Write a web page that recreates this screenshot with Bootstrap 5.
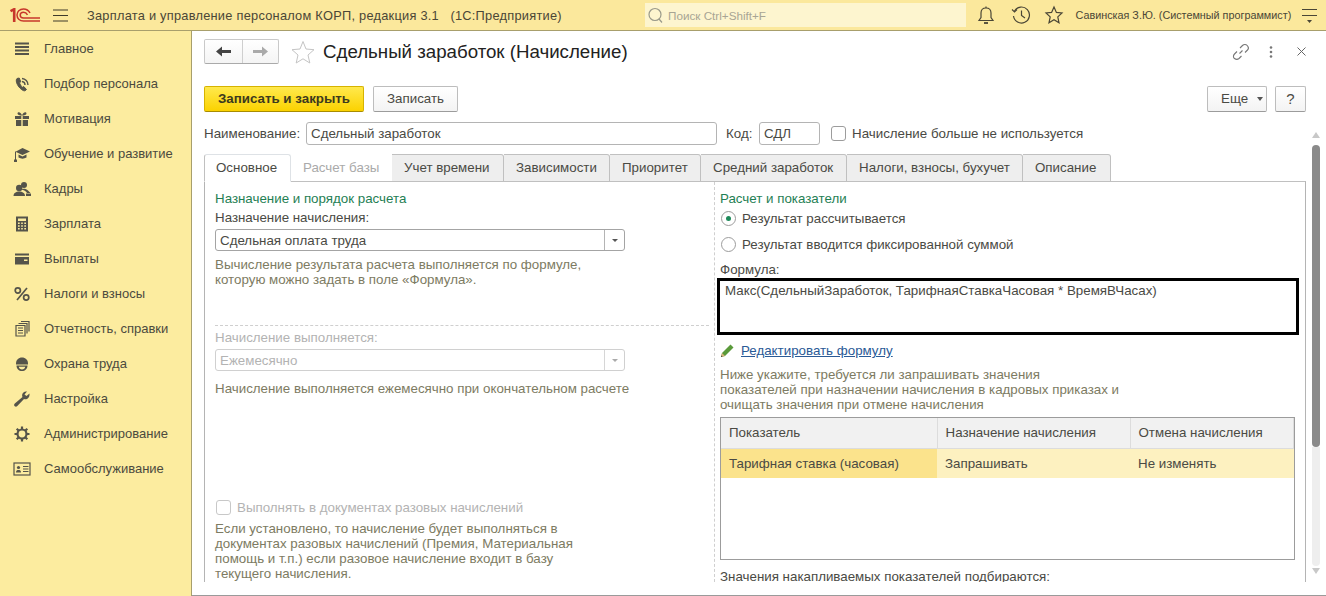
<!DOCTYPE html>
<html lang="ru">
<head>
<meta charset="utf-8">
<title>Сдельный заработок (Начисление)</title>
<link href="https://cdn.jsdelivr.net/npm/bootstrap@5.3.0/dist/css/bootstrap.min.css" rel="stylesheet">
<style>
html,body{height:596px;overflow:hidden}
body{font-family:"Liberation Sans",Arial,sans-serif;font-size:13.33px;color:#4a4a44;background:#fff;line-height:15px}
.app-top{height:31px;background:#fbe89c;border-bottom:1px solid #a89f6c;color:#4a4636;padding-left:10px}
.app-logo{width:30px;height:14px;flex:none}
.app-burger{width:15px;height:13px;margin-left:13px;margin-right:19px;color:#3e3a2a;flex:none}
.app-title{font-size:12.8px;letter-spacing:.02em;width:558px;flex:none}
.app-search{width:321px;height:24px;background:#fdf5cf;color:#a8a594;padding-left:2px;margin-right:10px;font-size:11.7px;flex:none}
.app-ticon{width:20px;height:20px;color:#4a4636;flex:none}
.app-user{font-size:10.8px;margin-left:12px;width:226px;flex:none}
.app-body{height:565px}
.side{width:192px;background:#fcec9f;border-right:1px solid #a89f6c;flex:none;color:#4b4a3e}
.side-item{height:35px;padding-left:13px;gap:13px;font-size:13px}
.side-item svg{width:18px;height:18px;flex:none;color:#55544a}
.work{border-bottom:1px solid #9a9a9a;height:565px;overflow:hidden}
.work-main{width:1114px;padding:8px 0 0 12px;flex:none}
.nav-pair{width:75px;height:25px;border:1px solid #c9c9c9;border-bottom-color:#aaa;border-radius:2px;background:linear-gradient(#fff,#f4f4f4)}
.nav-pair span{width:50%;color:#444}
.nav-pair span+span{border-left:1px solid #cfcfcf;color:#aaa}
.page-star{width:24px;height:24px;margin-left:12px;margin-right:8px;color:#c4c4c4}
.page-title{font-size:18.7px;line-height:25px;color:#222;font-weight:400}
.bar-row{margin-top:22px;height:26px}
.btn-one{height:26px;padding:0 13px;font-size:13.33px;line-height:24px;border-radius:2px;border:1px solid #bdbdbd;border-bottom-color:#9c9c9c;background:linear-gradient(#fff,#f3f3f3);color:#4a4a44}
.btn-one:hover{border-color:#bdbdbd;color:#4a4a44}
.btn-save{width:160px;background:linear-gradient(#ffe94d,#fbd200);border-color:#d6b300;border-bottom-color:#a88c00;font-weight:700;color:#3c3a1e;margin-right:9px;padding:0}
.btn-save:hover{background:#fbd200;border-color:#d6b300;color:#3c3a1e}
.btn-more{width:60px;padding:0 0 0 13px}
.btn-more svg{margin-left:9px}
.btn-help{width:31px;padding:0;font-size:15px}
.name-row{margin-top:10px;height:23px}
.fld{height:23px;border:1px solid #b4b4b4;border-radius:3px;padding:0 4px;color:#4a4a44;line-height:21px;background:#fff}
.chk{width:15px;height:15px;border:1px solid #9c9c9c;border-radius:3px;background:#fff;flex:none}
.tab-line{margin-top:9px;height:27px;border-bottom:0;gap:0;flex-wrap:nowrap}
.tab-line .nav-link{height:28px;padding:4px 11px 0 12px;font-size:13.33px;color:#4a4a44;background:#eee;border:1px solid #c0c0c0;border-left:0;border-radius:0 3px 0 0;margin:0;line-height:17px;white-space:nowrap}
.tab-line .nav-link.active{padding-left:11px;background:#fff;border-left:1px solid #c0c0c0;border-bottom-color:#fff;border-radius:3px 3px 0 0;color:#4a4a44;position:relative;z-index:1}
.tab-line .nav-link.disabled{color:#aaa}
.pane{height:401px;width:1102px;border:1px solid #b4b4b4;border-bottom:0;border-top:1px solid #c0c0c0;overflow:hidden}
.col-l{width:510px;padding:9px 10px 0 10px;border-right:1px dashed #cfcfcf;flex:none}
.col-r{padding:9px 0 0 5px;flex:1;min-width:0}
.grp{color:#1f8054;height:15px}
.lbl{height:15px}
.help{color:#7d7b62}
.off{color:#b3b3b3}
.combo{height:22px;width:410px;border:1px solid #a4a4a4;border-radius:3px;padding-left:4px;color:#4a4a44;background:#fff}
.combo-off{border-color:#d0d0d0;color:#b3b3b3}
.combo-btn{width:20px;height:100%;border-left:1px solid #b4b4b4;flex:none}
.combo-off .combo-btn{border-left-color:#d6d6d6}
.combo-btn i{display:block;border:3px solid transparent;border-top:3px solid #555;border-bottom:0}
.combo-off .combo-btn i{border-top-color:#aaa}
.rule-d{border-top:1px dashed #cfcfcf;margin-right:-5px}
.rad{width:15px;height:15px;border:1px solid #9c9c9c;border-radius:50%;flex:none;background:#fff}
.rad i{display:block;width:5px;height:5px;border-radius:50%;background:#1e8a5a}
.formula{height:57px;width:582px;margin-left:-3px;border:3px solid #000;padding:2px 5px;color:#4a4a44;margin-top:1px}
.edit-link{color:#2a5a96;text-decoration:underline}
.grid-box{width:575px;height:143px;border:1px solid #9c9c9c;margin-top:5px}
.grid-t{table-layout:fixed;width:100%;margin:0;--bs-table-bg:transparent;color:#4a4a44}
.grid-t th,.grid-t td{height:30px;padding:0 8px;vertical-align:middle;font-weight:400;border:0;color:#4a4a44}
.grid-t th{background:#f1f1f1;border-right:1px solid #dcdcdc;border-bottom:1px solid #dcdcdc}
.grid-t td{background:#fdf1c0}
.grid-t td.cur{background:#fbe38c}
.scroll-col{width:20px;flex:none}
.scroll-up{width:0;height:0;border:4px solid transparent;border-bottom:6px solid #c8c8c8;border-top:0;margin-top:101px}
.scroll-thumb{width:8px;height:302px;background:#8a8a8a;border-radius:4px;margin-top:7px}
.scroll-track{width:8px;height:119px;background:#eee;border-radius:0 0 4px 4px}
.scroll-dn{width:0;height:0;border:4px solid transparent;border-top:6px solid #c8c8c8;border-bottom:0;margin-top:2px}
.act-icon{width:18px;height:18px;color:#777}
</style>
</head>
<body>
<header class="app-top d-flex align-items-center">
  <svg class="app-logo" viewBox="0 0 30 14" fill="none" stroke="#c8372b"><path d="M0.5 3.2L4.2 1.2V14" stroke-width="2.6"/><path d="M20 5C18.5 2.2 16 1 13.5 1 9.5 1 7 3.8 7 7S9.5 13 13.5 13H30" stroke-width="1.5"/><path d="M17.5 6.8C16.5 5 15 4.2 13.5 4.2 11.5 4.2 10.2 5.5 10.2 7S11.5 10 13.5 10H30" stroke-width="1.5"/></svg>
  <svg class="app-burger" viewBox="0 0 15 13" stroke="currentColor" fill="none"><path d="M0 1H15M0 6.5H15M0 12H15"/></svg>
  <div class="app-title text-nowrap">Зарплата и управление персоналом КОРП, редакция 3.1&nbsp;&nbsp; (1С:Предприятие)</div>
  <div class="app-search d-flex align-items-center gap-1">
    <svg width="17" height="17" viewBox="0 0 17 17" fill="none" stroke="#9a9a8a" stroke-width="1.2"><circle cx="8" cy="7.5" r="6"/><path d="M12 12l3 3.5"/></svg>
    <span>Поиск Ctrl+Shift+F</span>
  </div>
  <svg class="app-ticon" viewBox="0 0 20 20" fill="none" stroke="currentColor" stroke-width="1.2"><path d="M3 15.5H17L15 12.5V8C15 5 13 3 10 3S5 5 5 8V12.5Z"/><path d="M8 18H12" stroke-width="1.8"/><path d="M10 3V1.5"/></svg>
  <svg class="app-ticon" style="margin-left:15px" viewBox="0 0 20 20" fill="none" stroke="currentColor" stroke-width="1.2"><path d="M3.5 6A8 8 0 1 1 2.5 11"/><path d="M1 4.5L3.5 7 6 4.5" stroke-width="1.1"/><path d="M10.5 5.5V10.5L14 13"/></svg>
  <svg class="app-ticon" style="margin-left:12.5px" viewBox="0 0 20 20" fill="none" stroke="currentColor" stroke-width="1.2"><path d="M10 2L12.4 7.4 18 8 13.8 11.9 15 17.8 10 14.8 5 17.8 6.2 11.9 2 8 7.6 7.4Z"/></svg>
  <div class="app-user text-nowrap">Савинская З.Ю. (Системный программист)</div>
  <svg width="15" height="17" viewBox="0 0 15 17" fill="none" stroke="currentColor"><path d="M0 2.5H15M0 8.5H15"/><path d="M5 13H10L7.5 16Z" fill="currentColor" stroke="none"/></svg>
</header>
<div class="app-body d-flex">
  <nav class="side d-flex flex-column">
    <div class="side-item d-flex align-items-center"><svg viewBox="0 0 18 18" fill="currentColor"><path d="M2 2.5H16V4.5H2ZM2 6H16V8H2ZM2 9.5H16V11.5H2ZM2 13H16V15H2Z"/></svg>Главное</div>
    <div class="side-item d-flex align-items-center"><svg viewBox="0 0 18 18" fill="none" stroke="currentColor"><path d="M4 3.5C2.5 5 3.5 9 6 12S11 16.5 12.5 15.5L13.5 14.5 10.8 11.6 9.5 12.3C8.4 11.5 7 9.5 6.5 7.8L7.8 6.8 6.2 3Z" fill="currentColor"/><path d="M9 6.5A3.5 3.5 0 0 1 12 10M9 3.5A6.5 6.5 0 0 1 15 10" stroke-width="1.4"/></svg>Подбор персонала</div>
    <div class="side-item d-flex align-items-center"><svg viewBox="0 0 18 18" fill="currentColor"><path d="M2 6H8.3V9H2ZM9.7 6H16V9H9.7ZM3 10H8.3V16H3ZM9.7 10H15V16H9.7Z"/><path d="M8.5 5.5C7 5.5 4.5 5 4.5 3.5S6.5 1.8 7.5 3 9 5 9 5.5C9 5 9.5 4 10.5 3S13.5 2 13.5 3.5 11 5.5 9.5 5.5Z"/></svg>Мотивация</div>
    <div class="side-item d-flex align-items-center"><svg viewBox="0 0 18 18" fill="currentColor"><path d="M9.5 3L17 6.5 9.5 10 3 7V6.5Z"/><path d="M5.5 9.5L9.5 11.5 13.5 9.5V12.5C11 14 8 14 5.5 12.5Z"/><path d="M2 6.5H3V15H2Z"/><path d="M1 14.5H4V17H1Z"/></svg>Обучение и развитие</div>
    <div class="side-item d-flex align-items-center"><svg viewBox="0 0 18 18" fill="currentColor"><circle cx="11" cy="5" r="3"/><path d="M8 9.5C10 8.5 13 8.5 15 10.5L17.5 13H14C13 11 11 10 8 9.5Z"/><circle cx="6.2" cy="8" r="3.2"/><path d="M0.5 16C0.5 13 3 11.5 6.2 11.5S12 13 12 16Z"/><path d="M13 13.5H18V16H13Z"/></svg>Кадры</div>
    <div class="side-item d-flex align-items-center"><svg viewBox="0 0 18 18" fill="currentColor"><path fill-rule="evenodd" d="M3 1.5H15V16.5H3ZM5 3.5V6H13V3.5ZM5 7.5V9H6.7V7.5ZM8.2 7.5V9H9.8V7.5ZM11.3 7.5V9H13V7.5ZM5 10.2V11.7H6.7V10.2ZM8.2 10.2V11.7H9.8V10.2ZM11.3 10.2V11.7H13V10.2ZM5 13V14.5H6.7V13ZM8.2 13V14.5H9.8V13ZM11.3 13V14.5H13V13Z"/></svg>Зарплата</div>
    <div class="side-item d-flex align-items-center"><svg viewBox="0 0 18 18" fill="currentColor"><path fill-rule="evenodd" d="M2 3.5H16V5.5H2ZM2 7H16V14.5H2ZM11 9.5V11H14.5V9.5Z"/></svg>Выплаты</div>
    <div class="side-item d-flex align-items-center"><svg viewBox="0 0 18 18" fill="none" stroke="currentColor" stroke-width="1.7"><circle cx="4.8" cy="5.5" r="2.6"/><circle cx="13.2" cy="12.5" r="2.6"/><path d="M14 3L4 15"/></svg>Налоги и взносы</div>
    <div class="side-item d-flex align-items-center"><svg viewBox="0 0 18 18" fill="none" stroke="currentColor" stroke-width="1.2"><path d="M3 5.5H12V16H3ZM5 8H10M5 10.5H10M5 13H10"/><path d="M5.5 3.5H14V13.5M8 1.5H16V11.5"/></svg>Отчетность, справки</div>
    <div class="side-item d-flex align-items-center"><svg viewBox="0 0 18 18" fill="currentColor"><path d="M3 8.5C3 5 5.5 2.5 9 2.5S15 5 15 8.5V9.5H3Z"/><path d="M3.5 10.5H14.5C14.5 14 12 16 9 16S3.5 14 3.5 10.5ZM5.8 11.8C6 13.5 7.5 14.5 9 14.5S12 13.5 12.2 11.8Z" fill-rule="evenodd"/></svg>Охрана труда</div>
    <div class="side-item d-flex align-items-center"><svg viewBox="0 0 18 18" fill="currentColor"><path d="M16.5 3.5L13.5 6 11.5 4.5 14 1.5C11.5 1 9.5 2.5 9.2 4.5 9 5.5 9.2 6.5 9.5 7L1.8 13.5C0.8 14.5 1 15.8 1.8 16.3S3.5 16.8 4.3 16L11 9C13.5 10 17 8 16.5 3.5Z"/></svg>Настройка</div>
    <div class="side-item d-flex align-items-center"><svg viewBox="0 0 18 18" fill="none" stroke="currentColor"><circle cx="9" cy="9" r="4.5" stroke-width="2.2"/><path d="M9 1.5V4.5M9 13.5V16.5M1.5 9H4.5M13.5 9H16.5M3.7 3.7L5.8 5.8M12.2 12.2L14.3 14.3M3.7 14.3L5.8 12.2M12.2 5.8L14.3 3.7" stroke-width="2.2"/></svg>Администрирование</div>
    <div class="side-item d-flex align-items-center"><svg viewBox="0 0 18 18" fill="none" stroke="currentColor"><rect x="1" y="3" width="16" height="12" stroke-width="1.2"/><circle cx="5.5" cy="7.5" r="1.6" fill="currentColor" stroke="none"/><path d="M3 12.5C3 10.5 4 10 5.5 10S8 10.5 8 12.5Z" fill="currentColor" stroke="none"/><path d="M10 6.5H15.5M10 9H15.5M10 11.5H15.5" stroke-width="1.1"/></svg>Самообслуживание</div>
  </nav>
  <main class="work flex-grow-1 d-flex">
    <div class="work-main">
      <div class="d-flex align-items-center">
        <div class="nav-pair d-flex">
          <span class="d-flex align-items-center justify-content-center"><svg width="15" height="11" viewBox="0 0 15 11" fill="currentColor"><path d="M0 5.5L6 0.5V4H15V7H6V10.5Z"/></svg></span>
          <span class="d-flex align-items-center justify-content-center"><svg width="15" height="11" viewBox="0 0 15 11" fill="currentColor"><path d="M15 5.5L9 0.5V4H0V7H9V10.5Z"/></svg></span>
        </div>
        <svg class="page-star" viewBox="0 0 24 24" fill="none" stroke="currentColor"><path d="M12 1.5L15 9 23 9.7 17 15 18.8 23 12 18.8 5.2 23 7 15 1 9.7 9 9Z"/></svg>
        <h1 class="page-title m-0">Сдельный заработок (Начисление)</h1>
        <div class="d-flex align-items-center ms-auto">
          <svg class="act-icon" viewBox="0 0 18 18" fill="none" stroke="currentColor" stroke-width="1.1"><path d="M7.5 10.5L10.5 7.5M8 5L10.5 2.5C12 1 14 1.2 15.2 2.5S16.8 5.8 15.5 7L13 9.5M5 8.5L2.5 11C1 12.5 1.2 14.5 2.5 15.5S5.5 16.8 7 15.5L9.5 13"/></svg>
          <svg style="margin-left:19px" width="4" height="12" viewBox="0 0 4 12" fill="#777"><circle cx="2" cy="1.5" r="1.3"/><circle cx="2" cy="6" r="1.3"/><circle cx="2" cy="10.5" r="1.3"/></svg>
          <svg style="margin-left:24px" width="9" height="9" viewBox="0 0 9 9" fill="none" stroke="#666"><path d="M0.5 0.5L8.5 8.5M8.5 0.5L0.5 8.5"/></svg>
        </div>
      </div>
      <div class="bar-row d-flex align-items-start justify-content-between">
        <div class="d-flex">
          <button type="button" class="btn btn-one btn-save">Записать и закрыть</button>
          <button type="button" class="btn btn-one" style="width:85px;padding:0">Записать</button>
        </div>
        <div class="d-flex gap-2">
          <button type="button" class="btn btn-one btn-more d-flex align-items-center">Еще<svg width="6" height="4" viewBox="0 0 6 4" fill="#555"><path d="M0 0H6L3 4Z"/></svg></button>
          <button type="button" class="btn btn-one btn-help">?</button>
        </div>
      </div>
      <div class="name-row d-flex align-items-center">
        <label class="text-nowrap" style="width:102px">Наименование:</label>
        <div class="fld" style="width:411px">Сдельный заработок</div>
        <label style="margin-left:9px;width:33px">Код:</label>
        <div class="fld" style="width:61px">СДЛ</div>
        <span class="chk" style="margin-left:11px"></span>
        <span style="margin-left:6px">Начисление больше не используется</span>
      </div>
      <ul class="nav nav-tabs tab-line">
        <li class="nav-item"><a class="nav-link active" href="#" style="width:87px">Основное</a></li>
        <li class="nav-item"><a class="nav-link disabled" href="#" style="width:101px">Расчет базы</a></li>
        <li class="nav-item"><a class="nav-link" href="#" style="width:112px">Учет времени</a></li>
        <li class="nav-item"><a class="nav-link" href="#" style="width:106px">Зависимости</a></li>
        <li class="nav-item"><a class="nav-link" href="#" style="width:91px">Приоритет</a></li>
        <li class="nav-item"><a class="nav-link" href="#" style="width:146px">Средний заработок</a></li>
        <li class="nav-item"><a class="nav-link" href="#" style="width:176px">Налоги, взносы, бухучет</a></li>
        <li class="nav-item"><a class="nav-link" href="#" style="width:88px">Описание</a></li>
      </ul>
      <div class="pane d-flex">
        <section class="col-l">
          <div class="grp">Назначение и порядок расчета</div>
          <div class="lbl" style="margin-top:4px">Назначение начисления:</div>
          <div class="combo d-flex align-items-center justify-content-between" style="margin-top:4px"><span>Сдельная оплата труда</span><span class="combo-btn d-flex align-items-center justify-content-center"><i></i></span></div>
          <div class="help" style="margin-top:6px">Вычисление результата расчета выполняется по формуле,<br>которую можно задать в поле «Формула».</div>
          <div class="rule-d" style="margin-top:38px"></div>
          <div class="lbl off" style="margin-top:4px">Начисление выполняется:</div>
          <div class="combo combo-off d-flex align-items-center justify-content-between" style="margin-top:4px"><span>Ежемесячно</span><span class="combo-btn d-flex align-items-center justify-content-center"><i></i></span></div>
          <div class="help" style="margin-top:10px">Начисление выполняется ежемесячно при окончательном расчете</div>
          <div class="d-flex align-items-center off" style="margin-top:104px;padding-left:1px"><span class="chk" style="border-color:#c8c8c8"></span><span style="margin-left:6px">Выполнять в документах разовых начислений</span></div>
          <div class="help" style="margin-top:6px">Если установлено, то начисление будет выполняться в<br>документах разовых начислений (Премия, Материальная<br>помощь и т.п.) если разовое начисление входит в базу<br>текущего начисления.</div>
        </section>
        <section class="col-r">
          <div class="grp">Расчет и показатели</div>
          <div class="d-flex align-items-center" style="margin-top:5px;padding-left:1px"><span class="rad d-flex align-items-center justify-content-center"><i></i></span><span style="margin-left:6px">Результат рассчитывается</span></div>
          <div class="d-flex align-items-center" style="margin-top:11px;padding-left:1px"><span class="rad"></span><span style="margin-left:6px">Результат вводится фиксированной суммой</span></div>
          <div class="lbl" style="margin-top:10px">Формула:</div>
          <div class="formula">Макс(СдельныйЗаработок, ТарифнаяСтавкаЧасовая * ВремяВЧасах)</div>
          <div class="d-flex align-items-center" style="margin-top:8px"><svg width="15" height="15" viewBox="0 0 15 15"><path d="M1 14L2 10 10.5 1.5 13.5 4.5 5 13Z" fill="#5a9a3a"/><path d="M1 14L2 10 5 13Z" fill="#d9b27a"/><path d="M1 14L1.4 12.5 2.5 13.6Z" fill="#333"/></svg><a class="edit-link" href="#" style="margin-left:6px">Редактировать формулу</a></div>
          <div class="help" style="margin-top:9px">Ниже укажите, требуется ли запрашивать значения<br>показателей при назначении начисления в кадровых приказах и<br>очищать значения при отмене начисления</div>
          <div class="grid-box">
            <table class="table grid-t">
              <colgroup><col style="width:216px"><col style="width:193px"><col></colgroup>
              <thead><tr><th>Показатель</th><th>Назначение начисления</th><th>Отмена начисления</th></tr></thead>
              <tbody><tr><td class="cur">Тарифная ставка (часовая)</td><td>Запрашивать</td><td>Не изменять</td></tr></tbody>
            </table>
          </div>
          <div class="lbl" style="margin-top:9px">Значения накапливаемых показателей подбираются:</div>
        </section>
      </div>
    </div>
    <div class="scroll-col d-flex flex-column align-items-center">
      <div class="scroll-up"></div>
      <div class="scroll-thumb"></div>
      <div class="scroll-track"></div>
      <div class="scroll-dn"></div>
    </div>
  </main>
</div>
<script src="https://cdn.jsdelivr.net/npm/bootstrap@5.3.0/dist/js/bootstrap.bundle.min.js"></script>
</body>
</html>
